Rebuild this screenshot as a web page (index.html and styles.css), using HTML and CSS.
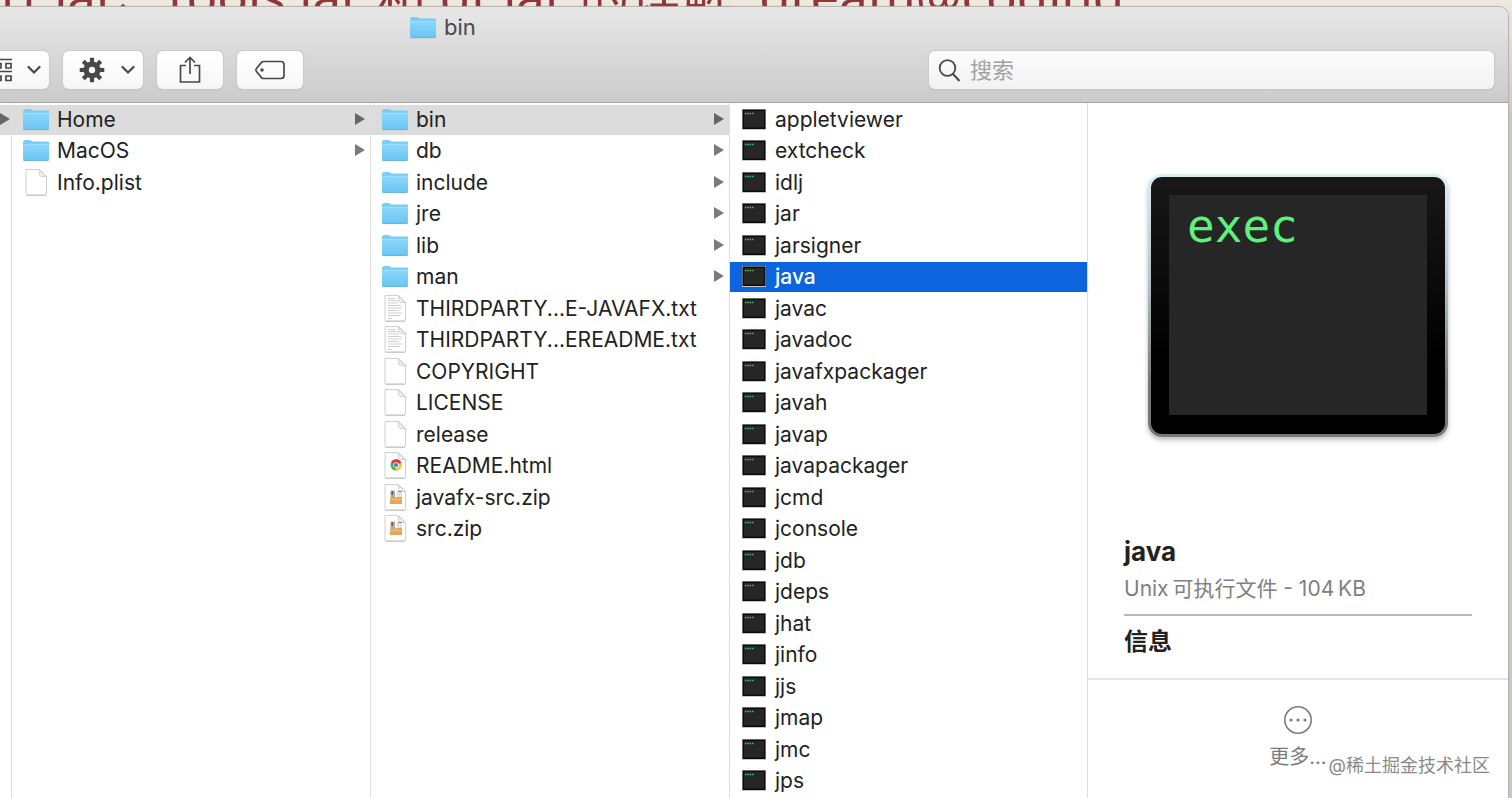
FILE: index.html
```html
<!DOCTYPE html>
<html lang="zh-CN">
<head>
<meta charset="utf-8">
<title>bin</title>
<link rel="stylesheet" href="styles.css">
<script src="files.js" defer></script>
</head>
<body>
<!-- shared icons -->
<svg class="defs" aria-hidden="true">
	<defs>
		<linearGradient id="gFolder" x1="0" y1="0" x2="0" y2="1">
			<stop offset="0" stop-color="#8bd7fa"/>
			<stop offset="1" stop-color="#6ac6f3"/>
		</linearGradient>
	</defs>
	<symbol id="i-folder" viewBox="0 0 28 28">
		<path d="M1 6.500q0-2.500 2-2.500h4.500q1 0 1.800.700l1.200.800H26q1 0 1 1V23H1z" fill="#7accf2"/>
		<path d="M1 8h26v15.200q0 1.300-1.300 1.300H2.300Q1 24.500 1 23.200z" fill="url(#gFolder)"/>
		<path d="M1 8.300h26" stroke="#a9e3fc" stroke-width=".8"/>
		<path d="M1.500 24.600h25" stroke="#5da9ce" stroke-width=".9"/>
	</symbol>
	<symbol id="i-doc" viewBox="0 0 28 28">
		<path d="M4 1.500h13.500l7 7V26q0 1-1 1H5q-1 0-1-1z" fill="#fff" stroke="#d0d0d0"/>
		<path d="M4.500 27.300h19.500" stroke="#b4b4b4" stroke-width=".7"/>
		<path d="M17 1.500c1.500 1.500 0 5 .8 6.200s5 .3 6.700 1.300z" fill="#f1f1f1" stroke="#c4c4c4" stroke-width=".8"/>
	</symbol>
	<symbol id="i-txt" viewBox="0 0 28 28">
		<use href="#i-doc"/>
		<path d="M7 4.500h7M7 6.500h9M7 9h10M7 11.500h13M7 14h14M7 16.500h11M7 19h14M7 21.500h12M7 24.500h4" stroke="#cacaca" stroke-width=".9"/>
	</symbol>
	<symbol id="i-html" viewBox="0 0 28 28">
		<use href="#i-doc"/>
		<circle cx="15" cy="14" r="5.500" fill="#4caf50"/>
		<path d="M15 14 10.200 11.300A5.500 5.500 0 0 1 20.400 12z" fill="#de3c32"/>
		<path d="M15 14l5.300-2.300A5.500 5.500 0 0 1 14.500 19.500z" fill="#fbcb3f"/>
		<circle cx="15" cy="14" r="2.700" fill="#fff"/>
		<circle cx="15" cy="14" r="2.100" fill="#3f7de0"/>
	</symbol>
	<symbol id="i-zip" viewBox="0 0 28 28">
		<use href="#i-doc"/>
		<path d="M9.500 7.500H14V16H9.500z" fill="#b9a896"/>
		<path d="M10.500 8.500h1.500v3h-1.500z" fill="#4f443b"/>
		<path d="M15.500 7.500H21V16h-5.500z" fill="#e2e2e2"/>
		<path d="M17.500 8.500h3" stroke="#777"/>
		<path d="M9 15.500h5l1-1.500h6v7H9z" fill="#dfa957"/>
		<path d="M9 16.500h12" stroke="#f0c887" stroke-width=".8"/>
	</symbol>
	<symbol id="i-exec" viewBox="0 0 28 28">
		<path d="M2 4h24v21H2z" fill="#c6c6c6"/>
		<path d="M2.500 4.500h23v19.500h-23z" fill="#0c0c0c"/>
		<path d="M4 6h20v16.500H4z" fill="#262626"/>
		<path d="M5 8.500h9" stroke="#3bb765" stroke-width="1.600" stroke-dasharray="1.600 .7"/>
	</symbol>
	<symbol id="i-more" viewBox="0 0 10 12">
		<path d="M0 0l10 6-10 6z" fill="currentColor"/>
	</symbol>
	<symbol id="i-chevron" viewBox="0 0 14 10">
		<path d="M1.500 2l5.500 5.500L12.500 2" fill="none" stroke="#484848" stroke-width="2.200" stroke-linecap="round"/>
	</symbol>
</svg>

<div class="desktop">
	<div class="behind">rt.jar、tools.jar 和 dt.jar 的理解. dream@coding</div>
	<main class="window">
		<header class="titlebar">
			<h1 class="title"><svg class="icon"><use href="#i-folder"/></svg>bin</h1>
			<div class="toolbar">
				<button class="btn btn-menu" type="button" aria-label="分组">
					<svg class="glyph" viewBox="0 0 28 28"><g fill="none" stroke="#484848" stroke-width="1.700"><path d="M0 3.500h28M0 15.500h28"/><path d="M2 7.500h5v4.500H2zM12 7.500h5v4.500h-5zM22 7.500h5v4.500h-5zM2 20h5v4.500H2zM12 20h5v4.500h-5zM22 20h5v4.500h-5z"/></g></svg>
					<svg class="chevron"><use href="#i-chevron"/></svg>
				</button>
				<button class="btn btn-menu" type="button" aria-label="操作">
					<svg class="glyph" viewBox="0 0 28 28"><g stroke="#484848" stroke-width="4.200"><path d="M14 1.700v24.600M1.700 14h24.600M5.300 5.300l17.400 17.400M22.700 5.300L5.300 22.700"/></g><circle cx="14" cy="14" r="8.500" fill="#484848"/><circle cx="14" cy="14" r="3.200" fill="#fafafa"/></svg>
					<svg class="chevron"><use href="#i-chevron"/></svg>
				</button>
				<button class="btn" type="button" aria-label="共享">
					<svg class="glyph" viewBox="0 0 28 28"><path d="M10 9.500H4.500v16.500h19V9.500H18M14 18V2M9 6.500L14 1.500l5 5" fill="none" stroke="#484848" stroke-width="1.700"/></svg>
				</button>
				<button class="btn" type="button" aria-label="标签">
					<svg class="glyph glyph-tag" viewBox="0 0 32 28"><path d="M9.500 5.500H27q3 0 3 3v11q0 3-3 3H9.500q-1.200 0-2-.9L2.300 15.300q-1-1.300 0-2.600L7.500 6.400q.8-.9 2-.9z" fill="none" stroke="#484848" stroke-width="1.700"/><circle cx="8" cy="14" r="1.700" fill="#484848"/></svg>
				</button>
				<label class="search">
					<svg class="search-icon" viewBox="0 0 24 24"><circle cx="9.500" cy="10" r="7.800" fill="none" stroke="#484848" stroke-width="1.800"/><path d="M15 16l6.500 7" stroke="#484848" stroke-width="2"/></svg>
					<input type="search" placeholder="搜索" aria-label="搜索">
				</label>
			</div>
		</header>
		<div class="browser">
			<ul class="column column-parent">
				<li class="row picked"><svg class="more"><use href="#i-more"/></svg></li>
			</ul>
			<ul class="column" id="contents"></ul>
			<ul class="column" id="home"></ul>
			<ul class="column column-last" id="bin"></ul>
			<section class="preview">
				<div class="preview-art">
					<div class="exec"><div class="exec-screen">exec</div></div>
				</div>
				<div class="info">
					<h2 class="info-name">java</h2>
					<p class="info-kind">Unix&thinsp;可执行文件 - 104&thinsp;KB</p>
					<h3 class="info-head">信息</h3>
				</div>
				<div class="actions">
					<button class="more-btn" type="button">
						<svg viewBox="0 0 30 30"><circle cx="15" cy="15" r="13.200" fill="none" stroke="#7b7b7b" stroke-width="1.600"/><g fill="#7b7b7b"><circle cx="8" cy="15" r="1.600"/><circle cx="15" cy="15" r="1.600"/><circle cx="22" cy="15" r="1.600"/></g></svg>
						更多...
					</button>
				</div>
			</section>
		</div>
	</main>
	<div class="watermark">@稀土掘金技术社区</div>
</div>
</body>
</html>
```
FILE: styles.css
```css
* {
	box-sizing: border-box;
}
body {
	margin: 0;
	font-family: Inter, "Noto Sans CJK SC", sans-serif;
	font-size: 21px;
	color: #222;
}
h1, h2, h3, p, ul {
	margin: 0;
	padding: 0;
	font-weight: normal;
}
button, input {
	font: inherit;
}
.defs {
	position: absolute;
	width: 0;
	height: 0;
}
.desktop {
	position: relative;
	height: 100vh;
	padding: 7px 4px 0 0;
	overflow: hidden;
	background: linear-gradient(#eee9df, #cbc7c2 120px);
}
/* page title showing from under the window */
.behind {
	position: absolute;
	top: -39px;
	left: 1px;
	font-family: "Noto Sans", "Noto Sans CJK SC", sans-serif;
	font-size: 51px;
	line-height: 68px;
	white-space: nowrap;
	color: #91343e;
}
.window {
	position: relative;
	display: flex;
	flex-direction: column;
	height: 100%;
	background: #fff;
	border-radius: 0 9px 0 0;
	box-shadow: 0 0 1px 1px #b4b0a8;
	overflow: hidden;
}

/* title bar and tools */
.titlebar {
	height: 96px;
	flex: none;
	background: linear-gradient(#e7e7e7, #cbcbcb);
	border-bottom: 1px solid #a3a3a3;
}
.title {
	display: flex;
	align-items: center;
	gap: 7px;
	height: 40px;
	padding-left: 409px;
	font-size: 22px;
	color: #484848;
}
.icon {
	width: 28px;
	height: 28px;
	flex: none;
}
.toolbar {
	display: flex;
	gap: 14px;
	padding: 4px 14px 0 0;
}
.btn {
	display: flex;
	align-items: center;
	justify-content: center;
	flex: none;
	width: 66px;
	height: 38px;
	padding: 0;
	border: 0;
	border-radius: 6px;
	background: linear-gradient(#fff, #f6f6f6);
	box-shadow: 0 0 1px 1px #cacaca, 0 1px 1px #aaa;
}
.btn-menu {
	justify-content: flex-end;
	width: 80px;
	gap: 15px;
	padding-right: 8px;
}
.btn:first-child {
	margin-left: -31px;
}
.glyph {
	width: 28px;
	height: 28px;
}
.glyph-tag {
	width: 32px;
}
.chevron {
	width: 14px;
	height: 10px;
}
.search {
	display: flex;
	align-items: center;
	gap: 8px;
	width: 565px;
	height: 38px;
	margin-left: auto;
	padding: 0 9px;
	border-radius: 6px;
	background: linear-gradient(#fcfcfc, #f2f2f2);
	box-shadow: 0 0 1px 1px #cacaca, 0 1px 1px #aaa;
}
.search-icon {
	width: 24px;
	height: 24px;
}
.search input {
	flex: 1;
	min-width: 0;
	padding: 0;
	border: 0;
	outline: none;
	background: none;
	font-size: 22px;
}
.search input::placeholder {
	color: #a2a2a2;
}

/* column view */
.browser {
	display: flex;
	flex: 1;
	min-height: 0;
}
.column {
	width: 359px;
	flex: none;
	padding-top: 2px;
	overflow: hidden;
	list-style: none;
	border-right: 1px solid #dedede;
}
.column-parent {
	width: 12px;
}
.column-last {
	width: 358px;
}
.row {
	display: flex;
	align-items: center;
	gap: 7px;
	height: 30px;
	margin-bottom: 1px;
	padding: 0 5px 2px 10px;
	white-space: nowrap;
}
.row:nth-child(even) {
	margin-bottom: 2px;
}
.row .name {
	flex: 1;
}
.column-parent .row {
	justify-content: flex-end;
}
.more {
	width: 10px;
	height: 12px;
	flex: none;
	color: #7b7b7b;
}
.picked {
	background: #dcdcdc;
}
.picked .more {
	color: #666;
}
.active {
	background: #0d65de;
	color: #fff;
	font-weight: 500;
}

/* preview */
.preview {
	display: flex;
	flex-direction: column;
	flex: 1;
	min-width: 0;
}
.preview-art {
	display: flex;
	justify-content: center;
	padding: 71px 0 97px;
}
.exec {
	width: 300px;
	height: 263px;
	padding: 18px;
	border: 3px solid transparent;
	border-radius: 14px;
	background:
		linear-gradient(#181818, #000 70%) padding-box,
		linear-gradient(#dceff4, #b5c4c8 40%, #777 80%) border-box;
	box-shadow: 0 3px 5px #bbb;
}
.exec-screen {
	height: 220px;
	padding: 3px 18px;
	background: #262626;
	color: #5bf37b;
	font-family: "DejaVu Sans Mono", monospace;
	font-size: 46px;
	line-height: 56px;
}
.info {
	padding: 0 36px;
}
.info-name {
	font-size: 26px;
	line-height: 36px;
	font-weight: 700;
}
.info-kind {
	height: 46px;
	padding-top: 3px;
	line-height: 32px;
	border-bottom: 2px solid #b9b9b9;
	color: #808080;
}
.info-head {
	padding: 8px 0 18px;
	font-size: 24px;
	line-height: 36px;
	font-weight: 700;
}
.actions {
	flex: 1;
	padding-top: 25px;
	border-top: 2px solid #e4e4e4;
	text-align: center;
}
.more-btn {
	display: inline-flex;
	flex-direction: column;
	align-items: center;
	gap: 8px;
	padding: 0;
	border: 0;
	background: none;
	font-size: 20px;
	line-height: 28px;
	color: #7b7b7b;
}
.more-btn svg {
	width: 30px;
	height: 30px;
}
.watermark {
	position: absolute;
	right: 22px;
	bottom: 18px;
	font-size: 18px;
	line-height: 28px;
	color: #8a8a8a;
	text-shadow: 1px 1px 1px #fff;
}
```
FILE: files.js
```js
// name, icon, state
var columns = {
	contents: [
		["Home", "folder", "picked"],
		["MacOS", "folder"],
		["Info.plist", "doc"]
	],
	home: [
		["bin", "folder", "picked"],
		["db", "folder"],
		["include", "folder"],
		["jre", "folder"],
		["lib", "folder"],
		["man", "folder"],
		["THIRDPARTY...E-JAVAFX.txt", "txt"],
		["THIRDPARTY...EREADME.txt", "txt"],
		["COPYRIGHT", "doc"],
		["LICENSE", "doc"],
		["release", "doc"],
		["README.html", "html"],
		["javafx-src.zip", "zip"],
		["src.zip", "zip"]
	],
	bin: ["appletviewer", "extcheck", "idlj", "jar", "jarsigner", "java", "javac",
		"javadoc", "javafxpackager", "javah", "javap", "javapackager", "jcmd",
		"jconsole", "jdb", "jdeps", "jhat", "jinfo", "jjs", "jmap", "jmc", "jps"
	].map(function (n) {
		return [n, "exec", n === "java" ? "active" : ""];
	})
};

for (var id in columns) {
	document.getElementById(id).innerHTML = columns[id].map(function (f) {
		var html = '<li class="row ' + (f[2] || "") + '">';
		html += '<svg class="icon"><use href="#i-' + f[1] + '"/></svg>';
		html += '<span class="name">' + f[0] + '</span>';
		if (f[1] === "folder") {
			html += '<svg class="more"><use href="#i-more"/></svg>';
		}
		return html + "</li>";
	}).join("");
}
```
